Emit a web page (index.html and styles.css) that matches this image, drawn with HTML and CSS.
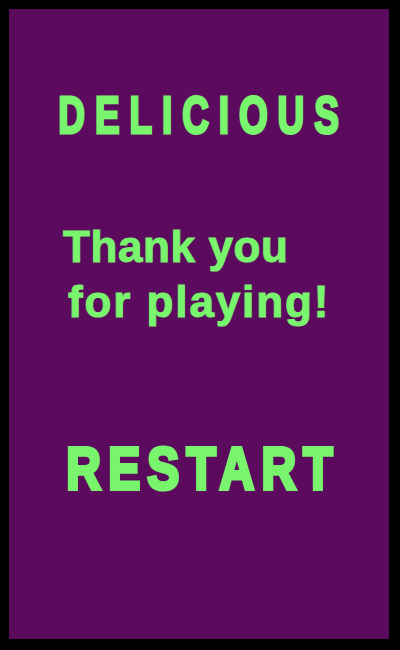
FILE: index.html
```html
<!DOCTYPE html>
<html>
<head>
<meta charset="utf-8">
<link rel="stylesheet" href="styles.css">
</head>
<body>
<main class="panel">
  <h1 class="title"><span class="title-text">DELICIOUS</span></h1>
  <div class="message">
    <div class="line line-one">Thank you</div>
    <div class="line line-two">for playing!</div>
  </div>
  <div class="restart"><span class="restart-text">RESTART</span></div>
</main>
</body>
</html>
```
FILE: styles.css
```css
html, body {
  margin: 0;
  padding: 0;
  background: #000;
}
body {
  width: 400px;
  height: 650px;
  overflow: hidden;
}
.panel {
  box-sizing: border-box;
  margin: 9px 11px 11px 9px;
  width: 380px;
  height: 630px;
  background: #5c0a5e;
  padding-top: 80px;
  display: flex;
  flex-direction: column;
  color: #79f46d;
  font-family: "Liberation Sans", Arial, sans-serif;
  font-weight: bold;
}
.title {
  margin: 0;
  font-size: 52px;
  line-height: 52px;
  font-weight: bold;
  text-align: center;
}
.title-text {
  display: inline-block;
  margin: 0 -40px;
  letter-spacing: 14px;
  padding-left: 14px;
  -webkit-text-stroke: 3px #79f46d;
  transform: scaleX(0.71);
}
.message {
  margin-top: 78px;
  padding-left: 54px;
  font-size: 44px;
  line-height: 55px;
  -webkit-text-stroke: 1px #79f46d;
}
.line-one {
  letter-spacing: 0.6px;
}
.line-two {
  margin-left: 5px;
  letter-spacing: 1.9px;
}
.restart {
  margin-top: 110px;
  font-size: 60px;
  line-height: 60px;
  text-align: center;
}
.restart-text {
  display: inline-block;
  margin: 0 -20px;
  letter-spacing: 9px;
  padding-left: 9px;
  -webkit-text-stroke: 4px #79f46d;
  transform: scaleX(0.8);
}
```
